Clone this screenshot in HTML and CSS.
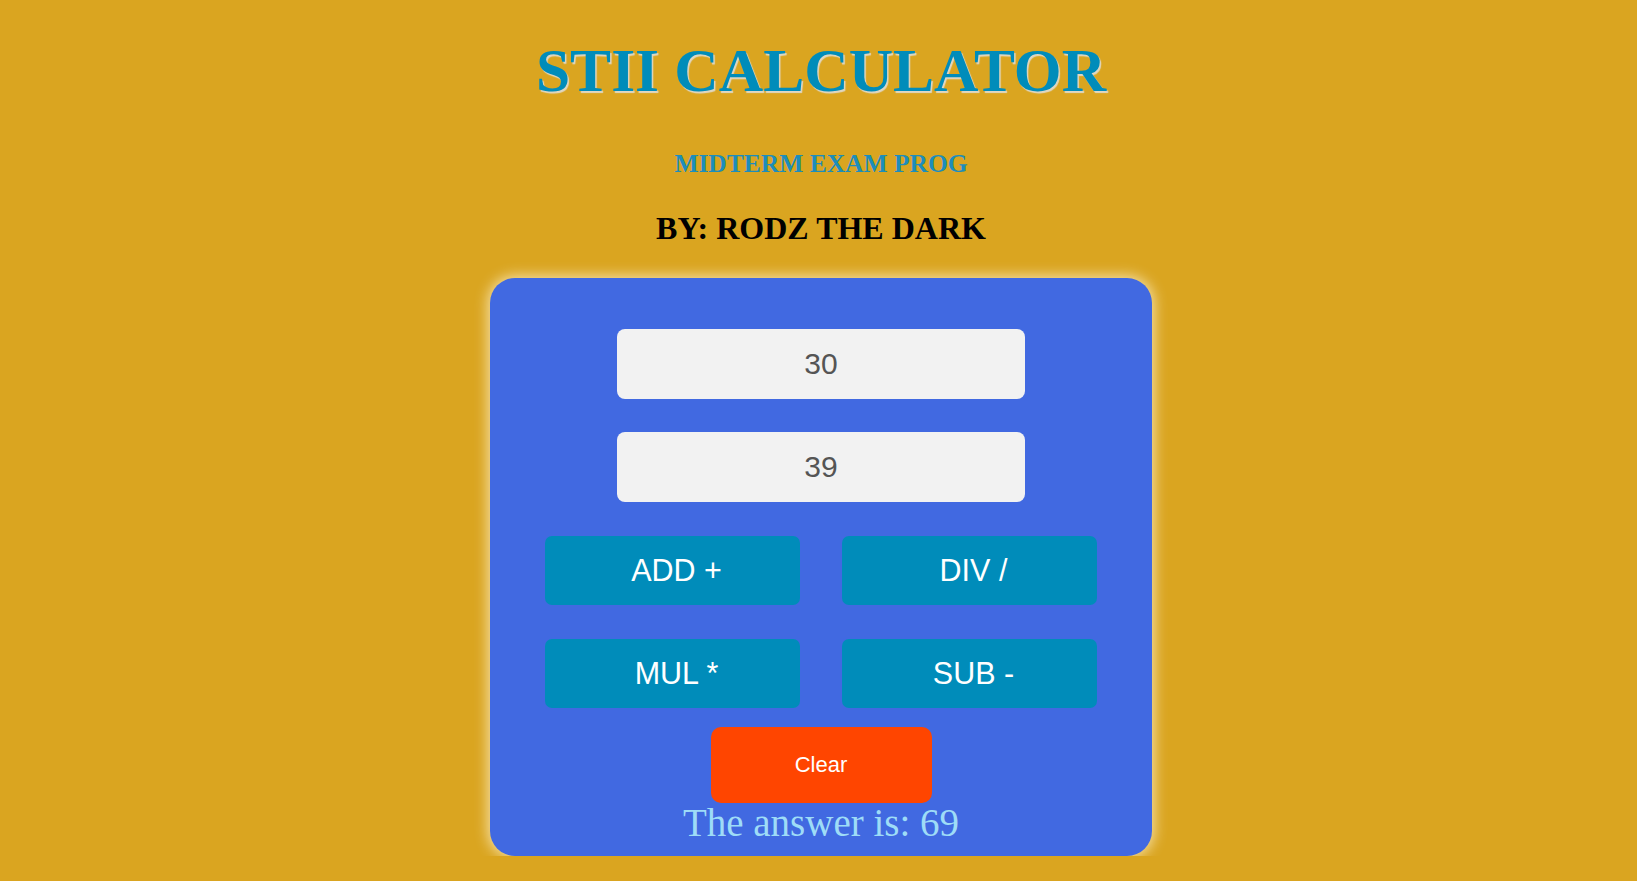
FILE: index.html
```html
<!DOCTYPE html>
<html lang="en">
<head>
<meta charset="utf-8">
<title>STII Calculator</title>
<link rel="stylesheet" href="styles.css">
</head>
<body>
  <header class="heading">
    <h1 class="title">STII CALCULATOR</h1>
    <h3 class="subtitle">MIDTERM EXAM PROG</h3>
    <h2 class="author">BY: RODZ THE DARK</h2>
  </header>
  <main class="calc">
    <input class="num" type="text" value="30">
    <input class="num" type="text" value="39">
    <div class="ops">
      <button class="op">ADD +</button>
      <button class="op">DIV /</button>
      <button class="op">MUL *</button>
      <button class="op">SUB -</button>
    </div>
    <button class="clear">Clear</button>
    <p class="answer">The answer is: 69</p>
  </main>
</body>
</html>
```

FILE: styles.css
```css
html, body {
  background: #daa520;
}
body {
  margin: 0;
  padding: 40px 8px 0 13px;
  font-family: "Liberation Serif", "Times New Roman", serif;
}
.heading {
  display: flex;
  flex-direction: column;
  align-items: center;
  text-align: center;
}
.title {
  margin: 0;
  font-size: 61.5px;
  line-height: 1;
  font-weight: bold;
  color: #008cba;
  text-shadow: 1.5px 1.5px 1px rgba(225, 225, 225, 0.85);
}
.subtitle {
  margin: 49.5px 0 0;
  font-size: 25.5px;
  line-height: 1;
  font-weight: bold;
  color: #1d8dba;
}
.author {
  margin: 35px 0 0;
  font-size: 32px;
  line-height: 1;
  font-weight: bold;
  color: #000;
}
.calc {
  box-sizing: border-box;
  width: 662px;
  height: 578px;
  margin: 34px auto 0;
  padding: 51px 0 0;
  background: #4169e1;
  border-radius: 25px;
  box-shadow: 0 0 14px 2px rgba(255, 245, 215, 0.75);
  display: flex;
  flex-direction: column;
  align-items: center;
}
.num {
  box-sizing: border-box;
  width: 408px;
  height: 70px;
  border: none;
  outline: none;
  border-radius: 8px;
  background: #f2f2f2;
  color: #555;
  font-family: "Liberation Sans", Arial, sans-serif;
  font-size: 30px;
  text-align: center;
  padding: 0;
}
.num + .num {
  margin-top: 33px;
}
.ops {
  display: grid;
  grid-template-columns: 255px 255px;
  column-gap: 42px;
  row-gap: 34px;
  margin-top: 34px;
}
.op {
  height: 69px;
  border: none;
  border-radius: 7px;
  background: #008cba;
  color: #fff;
  font-family: "Liberation Sans", Arial, sans-serif;
  font-size: 30.5px;
  padding: 0 0 0 8px;
}
.clear {
  margin-top: 19px;
  width: 221px;
  height: 76px;
  border: none;
  border-radius: 10px;
  background: #ff4500;
  color: #fff;
  font-family: "Liberation Sans", Arial, sans-serif;
  font-size: 22px;
  padding: 0;
}
.answer {
  margin: 0;
  font-size: 39px;
  line-height: 1;
  color: #9edcf7;
  text-align: center;
}
```
